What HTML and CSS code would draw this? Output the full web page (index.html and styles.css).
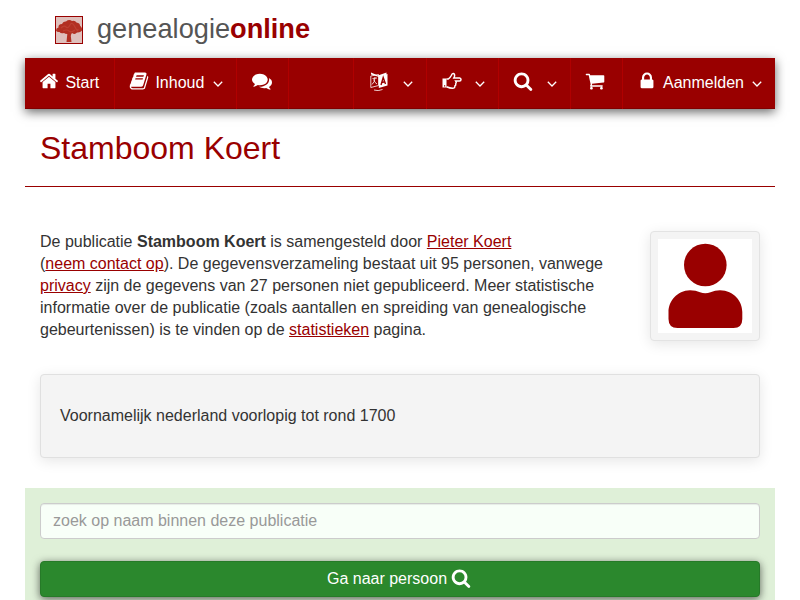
FILE: index.html
```html
<!DOCTYPE html>
<html lang="nl">
<head>
<meta charset="utf-8">
<title>Stamboom Koert</title>
<link rel="stylesheet" href="styles.css">
</head>
<body>
<svg class="defs" width="0" height="0">
<symbol id="search" viewBox="0 0 1792 1792"><path d="M1216 832q0-185-131.500-316.500t-316.500-131.500-316.500 131.500-131.500 316.500 131.500 316.500 316.500 131.500 316.500-131.500 131.500-316.500zm512 832q0 52-38 90t-90 38q-54 0-90-38l-343-342q-179 124-399 124-143 0-273.500-55.500t-225-150-150-225-55.500-273.500 55.500-273.500 150-225 225-150 273.500-55.500 273.500 55.500 225 150 150 225 55.500 273.500q0 220-124 399l343 343q37 37 37 90z"/></symbol>
<symbol id="chevron" viewBox="0 0 10 6"><path d="M.8.8 5 5 9.200.8" fill="none" stroke="#fff" stroke-width="1.300"/></symbol>
</svg>
<div class="container">
<header class="brand">
<svg class="logo" viewBox="0 0 28 28"><rect x=".5" y=".5" width="27" height="27" fill="#dfc0bc" stroke="#900"/><path d="M1 14.500Q1 12 3.500 11.500 3 8 7 8 8 5 11 5.500 14 3 17 5 20 4 21.500 6.500 25 7 25 9.500 27 11 27 14.500 25 17 22 16.500 20 19 17 17 16 18 15.800 20L16.500 26H11.500L12.300 18Q10 18 9 17 6 18 4.500 16 2 16.500 1 14.500Z" fill="#b23022"/><path d="M6 12q3-3 5-1t4-2 5 2 3 2M8 15q4-2 6 0t6-1" fill="none" stroke="#bd4032" stroke-width="1.200"/></svg>
<span class="name">genealogie<b>online</b></span>
</header>
<nav class="nav">
<a class="item start"><svg class="icon" viewBox="0 0 1792 1792"><path d="M1472 992v480q0 26-19 45t-45 19h-384v-384h-256v384h-384q-26 0-45-19t-19-45v-480q0-1 .5-3t.5-3l575-474 575 474q1 2 1 6zm223-69l-62 74q-8 9-21 11h-3q-13 0-21-7l-692-577-692 577q-12 8-24 7-13-2-21-11l-62-74q-8-10-7-23.500t11-21.500l719-599q32-26 76-26t76 26l244 204v-195q0-14 9-23t23-9h192q14 0 23 9t9 23v408l219 182q10 8 11 21.500t-7 23.500z"/></svg><span>Start</span></a>
<a class="item content"><svg class="icon" viewBox="0 0 1792 1792"><path d="M1703 478q40 57 18 129l-275 906q-19 64-76.500 107.500t-122.500 43.500h-923q-77 0-148.500-53.500t-99.500-131.500q-24-67-2-127 0-4 3-27t4-37q1-8-3-21.500t-3-19.500q2-11 8-21t16.500-23.500 16.500-23.500q23-38 45-91.500t30-91.500q3-10 .5-30t-.5-28q3-11 17-28t17-23q21-36 42-92t25-90q1-9-2.500-32t.5-28q4-13 22-30.500t22-22.500q19-26 42.500-84.500t27.500-96.500q1-8-3-25.500t-2-26.500q2-8 9-18t18-23 17-21q8-12 16.500-30.500t15-35 16-36 19.500-32 26.500-23.500 36-11.500 47.500 5.500l-1 3q38-9 51-9h761q74 0 114 56t18 130l-274 906q-36 119-71.500 153.500t-128.500 34.500h-869q-27 0-38 15-11 16-1 43 24 70 144 70h923q29 0 56-15.500t35-41.500l300-987q7-22 5-57 38 15 59 43zm-1064 2q-4 13 2 22.500t20 9.500h608q13 0 25.500-9.500t16.500-22.500l21-64q4-13-2-22.500t-20-9.500h-608q-13 0-25.500 9.500t-16.500 22.500zm-83 256q-4 13 2 22.500t20 9.500h608q13 0 25.500-9.500t16.500-22.500l21-64q4-13-2-22.500t-20-9.500h-608q-13 0-25.500 9.500t-16.500 22.500z"/></svg><span>Inhoud</span><svg class="chev"><use href="#chevron"/></svg></a>
<a class="item small talk"><svg class="icon" viewBox="0 0 1792 1792"><path d="M1408 768q0 139-94 257t-256.500 186.500-353.500 68.500q-86 0-176-16-124 88-278 128-36 9-86 16h-3q-11 0-20.500-8t-11.500-21q-1-3-1-6.500t.5-6.500 2-6l2.500-5 3.500-5.500 4-5 4.500-5 4-4.500q5-6 23-25t26-29.500 22.500-29 25-38.500 20.500-44q-124-72-195-177t-71-224q0-139 94-257t256.500-186.500 353.500-68.500 353.500 68.500 256.500 186.500 94 257zm384 256q0 120-71 224.500t-195 176.500q10 24 20.500 44t25 38.500 22.500 29 26 29.500 23 25q1 1 4 4.500t4.500 5 4 5 3.500 5.500l2.500 5 2 6 .5 6.500-1 6.500q-3 14-13 22t-22 7q-50-7-86-16-154-40-278-128-90 16-176 16-271 0-472-132 58 4 88 4 161 0 309-45t264-129q125-92 192-212t67-254q0-77-23-152 129 71 204 178t75 230z"/></svg></a>
<div class="right">
<a class="item drop shifted"><svg class="icon" viewBox="0 0 20 20"><path d="M2 1.500 9 4.500 17.500 1.500V4L10 6 2 3.500Z"/><path d="M9.800 5.500 18.500 3V14.500L9.800 17Z"/><path d="M1.800 5 9.500 3.500V14.500L1.800 16.500ZM5 19Q9 20.500 13.500 18.500M3.500 7.500 8 7M6 6Q6 11 3 13.500M4.500 8.500Q6 12 8 13" fill="none" stroke="#fff" stroke-width=".8"/><path d="m12 14 2.200-7.500L16.500 13M12.800 11.500 15.800 10.800" fill="none" stroke="#900" stroke-width="1.400"/></svg><svg class="chev"><use href="#chevron"/></svg></a>
<a class="item drop shifted"><svg class="icon" viewBox="0 0 20 20"><path d="M.5 7.500H4.500V16.500H.5ZM2 14.200V15.400H3.200V14.200Z" fill-rule="evenodd"/><path d="M4.500 8H6.300Q8.300 6.500 9.300 4.500 10 2.300 11.300 2.500 13.300 3 12.300 6L11.800 7H17.500Q19 7.200 19 8.500 19 10 17.500 10H13.700Q14.800 11.500 13.700 12.800 14.200 14.300 12.900 15 13 17.300 10.500 17.300 8 17.300 4.500 15.800" fill="none" stroke="#fff" stroke-width="1.500"/></svg><svg class="chev"><use href="#chevron"/></svg></a>
<a class="item drop"><svg class="icon"><use href="#search"/></svg><svg class="chev"><use href="#chevron"/></svg></a>
<a class="item small"><svg class="icon" viewBox="0 0 1792 1792"><path d="M704 1536q0 52-38 90t-90 38-90-38-38-90 38-90 90-38 90 38 38 90zm896 0q0 52-38 90t-90 38-90-38-38-90 38-90 90-38 90 38 38 90zm128-1088v512q0 24-16.500 42.500t-40.500 21.500l-1044 122q13 60 13 70 0 16-24 64h920q26 0 45 19t19 45-19 45-45 19h-1024q-26 0-45-19t-19-45q0-11 8-31.500t16-36 21.500-40 15.500-29.500l-177-823h-204q-26 0-45-19t-19-45 19-45 45-19h256q16 0 28.500 6.500t19.500 15.500 13 24.500 8 26 5.500 29.500 4.500 26h1201q26 0 45 19t19 45z"/></svg></a>
<a class="item login"><svg class="icon" viewBox="0 0 1792 1792"><path d="M640 768h512v-192q0-106-75-181t-181-75-181 75-75 181v192zm832 96v576q0 40-28 68t-68 28h-960q-40 0-68-28t-28-68v-576q0-40 28-68t68-28h32v-192q0-184 132-316t316-132 316 132 132 316v192h32q40 0 68 28t28 68z"/></svg><span>Aanmelden</span><svg class="chev"><use href="#chevron"/></svg></a>
</div>
</nav>
<h1>Stamboom Koert</h1>
<main>
<section class="intro">
<p>De publicatie <b>Stamboom Koert</b> is samengesteld door <a>Pieter Koert</a><br>(<a>neem contact op</a>). De gegevensverzameling bestaat uit 95 personen, vanwege<br><a>privacy</a> zijn de gegevens van 27 personen niet gepubliceerd. Meer statistische<br>informatie over de publicatie (zoals aantallen en spreiding van genealogische<br>gebeurtenissen) is te vinden op de <a>statistieken</a> pagina.</p>
<div class="portrait"><svg viewBox="0 0 94 94"><rect width="94" height="94" fill="#fff"/><circle cx="47.300" cy="26" r="21.300" fill="#900"/><path d="M32 51.200Q38 51.300 42 53.200 47.300 55.400 52.500 53.200 57 51.300 62 51.200C76 51.500 84.300 62 84.300 73V80Q84.300 89 75.500 89H19.500Q10.500 89 10.500 80V73C10.500 62 19 51.500 32 51.200Z" fill="#900"/></svg></div>
</section>
<div class="well">Voornamelijk nederland voorlopig tot rond 1700</div>
</main>
<form class="find">
<input type="text" placeholder="zoek op naam binnen deze publicatie">
<button type="button">Ga naar persoon <svg class="icon"><use href="#search"/></svg></button>
</form>
</div>
</body>
</html>
```
FILE: styles.css
```css
* { box-sizing: border-box; }
html { overflow: hidden; }
body { margin: 0; height: 600px; overflow: hidden; background: #fff; color: #333; font: 16px/22px "Liberation Sans", Arial, sans-serif; }
.defs { display: block; height: 0; }
.container { width: 750px; margin: 0 auto; }
.brand { height: 58px; padding: 0 30px; display: flex; align-items: flex-start; gap: 14px; }
.logo { width: 28px; height: 28px; margin-top: 16px; }
.name { font-size: 27.2px; line-height: 32px; margin-top: 13px; color: #555; }
.name b { color: #900; }
.nav { display: flex; height: 51px; background: #900; color: #fff; box-shadow: 0 3px 10px rgba(0,0,0,.6), inset 0 -1px #800000; }
.item { display: flex; align-items: flex-start; height: 51px; padding: 13px 0 0 14px; border-right: 1px solid #b00000; }
.item span { line-height: 24px; margin-left: 6.4px; }
.icon { width: 20px; height: 20px; fill: currentColor; flex: none; }
.chev { width: 10px; height: 6px; margin: 10px 13px 0 auto; flex: none; }
.start { width: 90px; }
.content { width: 122px; }
.small { width: 52px; }
.talk, .shifted { padding-left: 15px; }
.right { display: flex; margin-left: auto; border-left: 1px solid #b00000; }
.drop { width: 72px; }
.drop:first-child { width: 73px; }
.login { width: 152px; border: 0; }
.login span { margin-left: 6px; }
h1 { margin: 0; height: 78px; padding: 21px 15px 0; border-bottom: 1px solid #900; color: #900; font-size: 32px; line-height: 36px; font-weight: 400; }
main { padding: 44px 15px 30px; }
.intro { display: flex; justify-content: space-between; height: 143px; }
.intro p { margin: 0; white-space: nowrap; }
.intro a { color: #900; text-decoration: underline; }
.portrait { width: 110px; height: 110px; padding: 7px; border: 1px solid #e3e3e3; border-radius: 4px; background: #f4f4f4; box-shadow: 0 3px 14px rgba(0,0,0,.1); }
.portrait svg { display: block; width: 94px; height: 94px; }
.well { height: 84px; padding: 30px 19px; border: 1px solid #e0e0e0; border-radius: 4px; background: #f4f4f4; box-shadow: 0 3px 14px rgba(0,0,0,.1); }
.find { height: 130px; padding: 15px; background: #dff0d8; display: flex; flex-direction: column; gap: 22px; }
.find input { width: 100%; height: 36px; padding: 6px 12px; border: 1px solid #ccc; border-radius: 4px; background: #f8fff8; font: inherit; box-shadow: inset 0 1px 1px rgba(0,0,0,.075); }
.find input::placeholder { color: #999; opacity: 1; }
.find button { display: flex; justify-content: center; gap: 4px; height: 36px; padding: 6px 13px 6px 11px; border: 1px solid #267a28; border-radius: 4px; background: #2b882d; color: #fff; font: inherit; box-shadow: 0 2px 8px rgba(0,0,0,.6); }
.find .icon { margin-top: 0; }
```
